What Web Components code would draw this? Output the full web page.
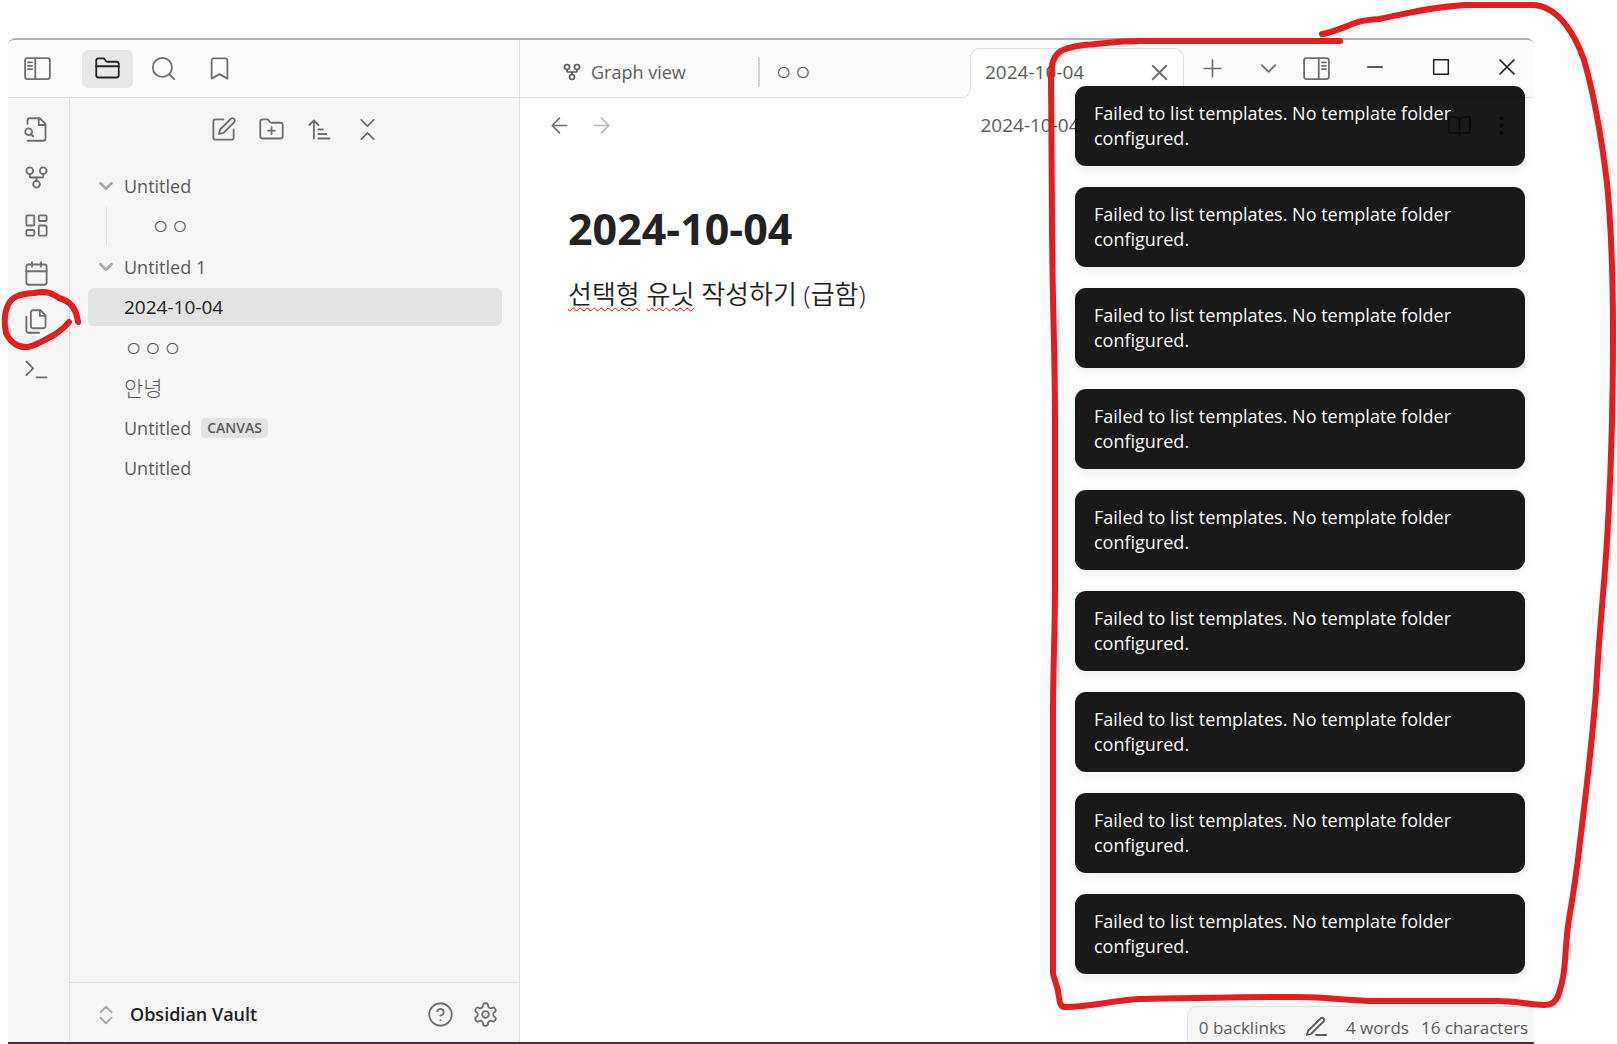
<!DOCTYPE html>
<html lang="ko">
<head>
<meta charset="utf-8">
<title>2024-10-04 - Obsidian Vault</title>
<style>
  body {
    margin: 0;
    min-height: 100vh;
    overflow: hidden;
    position: relative;
    background: #fff;
    color: #5c5c5c;
    font-family: "Open Sans", "Noto Sans CJK KR", sans-serif;
    font-size: 18px;
    line-height: 25px;
    --bar: #fcfcfc;
    --side: #f6f6f6;
    --line: #e0e0e0;
    --active: #e3e3e3;
    --faint: #ababab;
    --icon: #6f6f6f;
    --strong: #222;
  }
</style>
</head>
<body>
<app-window>
  <side-header slot="side-header"></side-header>
  <side-ribbon slot="ribbon"></side-ribbon>
  <file-explorer slot="explorer">
    <tree-folder label="Untitled">
      <tree-file label="ㅇㅇ" nested hangul></tree-file>
    </tree-folder>
    <tree-folder label="Untitled 1">
      <tree-file label="2024-10-04" selected></tree-file>
    </tree-folder>
    <tree-file label="ㅇㅇㅇ" hangul></tree-file>
    <tree-file label="안녕" hangul></tree-file>
    <tree-file label="Untitled" tag="CANVAS"></tree-file>
    <tree-file label="Untitled"></tree-file>
  </file-explorer>
  <tab-strip slot="tabs"></tab-strip>
  <note-view slot="note" heading="2024-10-04">
    <span class="typo">선택형</span> <span class="typo">유닛</span> 작성하기 (급함)
  </note-view>
  <status-bar slot="status"></status-bar>
  <notice-stack slot="notices" count="9">Failed to list templates. No template folder configured.</notice-stack>
</app-window>
<pen-marks></pen-marks>

<script>
  const ICONS = {
    left: '<rect x="1" y="2.8" width="22" height="18.6" rx="2"/><path d="M10 3v18M3.6 6.6h3.6M3.6 9.6h3.6M3.6 12.6h3.6"/>',
    right: '<rect x="1" y="2.8" width="22" height="18.6" rx="2"/><path d="M14 3v18M16.8 6.6h3.6M16.8 9.6h3.6M16.8 12.6h3.6"/>',
    folder: '<path d="M4 20h16a2 2 0 0 0 2-2V8a2 2 0 0 0-2-2h-7.9a2 2 0 0 1-1.7-.9l-.8-1.2A2 2 0 0 0 7.900 3H4a2 2 0 0 0-2 2v13c0 1.100.9 2 2 2Z"/><path d="M2 10h20"/>',
    search: '<circle cx="11" cy="11" r="8.500"/><path d="m21.500 21.500-4.500-4.500"/>',
    bookmark: '<path d="m19 21-7-4-7 4V5a2 2 0 0 1 2-2h10a2 2 0 0 1 2 2v16z"/>',
    fileSearch: '<path d="M4 22h14a2 2 0 0 0 2-2V7l-5-5H6a2 2 0 0 0-2 2v3"/><path d="M14 2v6h6"/><circle cx="5" cy="14" r="3"/><path d="m9 18-1.500-1.500"/>',
    fork: '<circle cx="12" cy="18" r="3"/><circle cx="6" cy="6" r="3"/><circle cx="18" cy="6" r="3"/><path d="M18 9v2c0 .6-.4 1-1 1H7c-.6 0-1-.4-1-1V9"/><path d="M12 12v3"/>',
    dashboard: '<rect x="3" y="3" width="7" height="9" rx="1"/><rect x="14" y="3" width="7" height="5" rx="1"/><rect x="14" y="12" width="7" height="9" rx="1"/><rect x="3" y="16" width="7" height="5" rx="1"/>',
    calendar: '<rect x="3" y="4" width="18" height="18" rx="2"/><path d="M16 2v4M8 2v4M3 10h18"/>',
    files: '<path d="M15.500 2H8.600c-.4 0-.8.2-1.100.5-.3.3-.5.7-.5 1.100v12.800c0 .4.2.8.5 1.100.3.3.7.5 1.100.5h9.800c.4 0 .8-.2 1.100-.5.3-.3.5-.7.5-1.100V6.500L15.500 2z"/><path d="M3 7.600v12.800c0 .4.2.8.5 1.100.3.3.7.5 1.100.5h9.800"/><path d="M15 2v5h5"/>',
    terminal: '<path d="m3 17 6-6-6-6M12 19h9"/>',
    edit: '<path d="M12 3H5a2 2 0 0 0-2 2v14a2 2 0 0 0 2 2h14a2 2 0 0 0 2-2v-7"/><path d="M18.400 2.600a2.100 2.100 0 1 1 3 3L12 15l-4 1 1-4Z"/>',
    folderPlus: '<path d="M4 20h16a2 2 0 0 0 2-2V8a2 2 0 0 0-2-2h-7.900a2 2 0 0 1-1.700-.9l-.8-1.200A2 2 0 0 0 7.900 3H4a2 2 0 0 0-2 2v13c0 1.100.9 2 2 2Z"/><path d="M12 10v6M9 13h6"/>',
    sort: '<path d="m3 8 4-4 4 4M7 4v16M11 12h4M11 16h7M11 20h10"/>',
    collapse: '<path d="m6.500 20.500 5.500-5.500 5.500 5.500M6.500 3.500 12 9l5.500-5.500"/>',
    updown: '<path d="m6 15 6 6 6-6M6 9l6-6 6 6"/>',
    help: '<circle cx="12" cy="12" r="10"/><path d="M9.100 9a3 3 0 0 1 5.800 1c0 2-3 3-3 3M12 17h.01"/>',
    gear: '<path d="M12.220 2h-.44a2 2 0 0 0-2 2v.18a2 2 0 0 1-1 1.730l-.43.25a2 2 0 0 1-2 0l-.15-.08a2 2 0 0 0-2.730.73l-.22.38a2 2 0 0 0 .73 2.730l.15.1a2 2 0 0 1 1 1.720v.51a2 2 0 0 1-1 1.740l-.15.09a2 2 0 0 0-.73 2.730l.22.38a2 2 0 0 0 2.730.73l.15-.08a2 2 0 0 1 2 0l.43.25a2 2 0 0 1 1 1.730V20a2 2 0 0 0 2 2h.44a2 2 0 0 0 2-2v-.18a2 2 0 0 1 1-1.730l.43-.25a2 2 0 0 1 2 0l.15.08a2 2 0 0 0 2.730-.73l.22-.39a2 2 0 0 0-.73-2.730l-.15-.08a2 2 0 0 1-1-1.740v-.5a2 2 0 0 1 1-1.740l.15-.09a2 2 0 0 0 .73-2.730l-.22-.38a2 2 0 0 0-2.730-.73l-.15.08a2 2 0 0 1-2 0l-.43-.25a2 2 0 0 1-1-1.730V4a2 2 0 0 0-2-2z"/><circle cx="12" cy="12" r="3"/>',
    chevron: '<path d="m6 9 6 6 6-6"/>',
    back: '<path d="m12 19-7-7 7-7M19 12H5"/>',
    forward: '<path d="M5 12h14M12 5l7 7-7 7"/>',
    book: '<path d="M2 4h6a4 4 0 0 1 4 3v14a3 3 0 0 0-3-2H2zM22 4h-6a4 4 0 0 0-4 3v14a3 3 0 0 1 3-2h7z"/>',
    dots: '<circle cx="12" cy="5" r="1"/><circle cx="12" cy="12" r="1"/><circle cx="12" cy="19" r="1"/>',
    close: '<path d="M18 6 6 18M6 6l12 12"/>',
    plus: '<path d="M4 12h16M12 4v16"/>',
    pen: '<path d="M12 20h10"/><path d="M16.500 3.500a2.100 2.100 0 0 1 3 3L7 19l-4 1 1-4Z"/>',
    minimize: '<path d="M4 12h16"/>',
    maximize: '<path d="M4 4h16v16H4z"/>'
  };

  // Attach an open shadow root and fill it from a template
  function render(host, html) {
    const template = document.createElement('template');
    template.innerHTML = html;
    host.attachShadow({ mode: 'open' }).appendChild(template.content.cloneNode(true));
  }

  const BUTTON_CSS = `
    button {
      display: flex;
      align-items: center;
      justify-content: center;
      flex: none;
      width: 40px;
      height: 38px;
      padding: 0;
      border: 0;
      border-radius: 6px;
      background: none;
      color: var(--icon);
      font: inherit;
      cursor: pointer;
    }
    button:hover { background: rgba(0, 0, 0, 0.06); }
  `;

  class UiIcon extends HTMLElement {
    connectedCallback() {
      const size = this.getAttribute('size') || 27;
      const weight = this.getAttribute('weight') || 1.6;
      render(this, `
        <style>
          :host { display: block; flex: none; }
          svg { display: block; fill: none; stroke: currentColor; stroke-linecap: round; stroke-linejoin: round; }
        </style>
        <svg aria-hidden="true" width="${size}" height="${size}" viewBox="0 0 24 24" stroke-width="${weight}">${ICONS[this.getAttribute('name')]}</svg>
      `);
    }
  }

  class AppWindow extends HTMLElement {
    constructor() {
      super();
      render(this, `
        <style>
          :host {
            display: grid;
            grid-template-columns: 512px 1fr;
            grid-template-rows: 58px 1fr;
            position: relative;
            box-sizing: border-box;
            height: calc(100vh - 38px);
            margin: 38px 83px 0 8px;
            border-top: 2px solid #b0b0b0;
            border-bottom: 2px solid #38383b;
            border-radius: 8px 8px 0 0;
          }
          .side {
            display: grid;
            grid-template-columns: 62px 1fr;
            min-height: 0;
            box-sizing: border-box;
            border-right: 1px solid var(--line);
            background: var(--side);
          }
          .notices { position: absolute; top: 46px; right: 9px; }
          .status { position: absolute; right: 0; bottom: 0; }
        </style>
        <slot name="side-header"></slot>
        <slot name="tabs"></slot>
        <div class="side">
          <slot name="ribbon"></slot>
          <slot name="explorer"></slot>
        </div>
        <slot name="note"></slot>
        <div class="status"><slot name="status"></slot></div>
        <div class="notices"><slot name="notices"></slot></div>
      `);
    }
  }

  class SideHeader extends HTMLElement {
    constructor() {
      super();
      render(this, `
        <style>
          ${BUTTON_CSS}
          :host {
            display: flex;
            align-items: center;
            box-sizing: border-box;
            padding-left: 9px;
            border-right: 1px solid var(--line);
            border-bottom: 1px solid var(--line);
            border-top-left-radius: 6px;
            background: var(--bar);
          }
          .views { display: flex; gap: 5px; margin-left: 25px; }
          .views button { width: 51px; }
          .views .on { background: #e8e8e8; color: var(--strong); }
        </style>
        <button aria-label="Collapse"><ui-icon name="left"></ui-icon></button>
        <div class="views">
          <button class="on" aria-label="Files"><ui-icon name="folder"></ui-icon></button>
          <button aria-label="Search"><ui-icon name="search"></ui-icon></button>
          <button aria-label="Bookmarks"><ui-icon name="bookmark"></ui-icon></button>
        </div>
      `);
    }
  }

  class SideRibbon extends HTMLElement {
    constructor() {
      super();
      const items = [
        ['fileSearch', 'Open quick switcher'],
        ['fork', 'Open graph view'],
        ['dashboard', 'Create new canvas'],
        ['calendar', "Open today's daily note"],
        ['files', 'Insert template'],
        ['terminal', 'Open command palette']
      ];
      render(this, `
        <style>
          ${BUTTON_CSS}
          :host {
            display: flex;
            flex-direction: column;
            gap: 10px;
            padding: 12px 0 0 8px;
            border-right: 1px solid var(--line);
          }
        </style>
        ${items.map(([icon, label]) => `<button aria-label="${label}"><ui-icon name="${icon}"></ui-icon></button>`).join('')}
      `);
    }
  }

  class FileExplorer extends HTMLElement {
    constructor() {
      super();
      render(this, `
        <style>
          ${BUTTON_CSS}
          :host { display: flex; flex-direction: column; min-width: 0; }
          .actions {
            display: flex;
            justify-content: center;
            gap: 8px;
            padding: 12px 0 19px 2px;
          }
          .tree {
            display: flex;
            flex-direction: column;
            gap: 2px;
            flex: 1;
            padding: 0 17px 0 18px;
          }
          .vault {
            display: flex;
            align-items: center;
            height: 55px;
            padding: 4px 11px 0 25px;
            border-top: 1px solid var(--line);
          }
          .vault .name {
            gap: 13px;
            width: auto;
            margin-right: auto;
            color: var(--strong);
            font-weight: 600;
          }
          .name ui-icon { color: var(--faint); }
          .vault .small { width: 45px; }
        </style>
        <div class="actions">
          <button aria-label="New note"><ui-icon name="edit"></ui-icon></button>
          <button aria-label="New folder"><ui-icon name="folderPlus"></ui-icon></button>
          <button aria-label="Change sort order"><ui-icon name="sort"></ui-icon></button>
          <button aria-label="Collapse all"><ui-icon name="collapse"></ui-icon></button>
        </div>
        <div class="tree"><slot></slot></div>
        <div class="vault">
          <button class="name"><ui-icon name="updown" size="22" weight="2"></ui-icon>Obsidian Vault</button>
          <button class="small" aria-label="Help"><ui-icon name="help"></ui-icon></button>
          <button class="small" aria-label="Settings"><ui-icon name="gear"></ui-icon></button>
        </div>
      `);
    }
  }

  class TreeFolder extends HTMLElement {
    constructor() {
      super();
      render(this, `
        <style>
          ${BUTTON_CSS}
          :host { display: block; padding-bottom: 1px; }
          button {
            justify-content: flex-start;
            gap: 7px;
            width: 100%;
            margin-bottom: 2px;
            padding-left: 7px;
            color: inherit;
          }
          ui-icon { color: var(--faint); }
        </style>
        <button><ui-icon name="chevron" size="22" weight="3"></ui-icon>${this.getAttribute('label')}</button>
        <slot></slot>
      `);
    }
  }

  class TreeFile extends HTMLElement {
    constructor() {
      super();
      const label = this.getAttribute('label');
      const tag = this.getAttribute('tag');
      render(this, `
        <style>
          :host { display: block; }
          :host([nested]) { margin-left: 18px; border-left: 1px solid var(--line); }
          a {
            display: flex;
            align-items: center;
            gap: 10px;
            height: 38px;
            padding-left: 36px;
            border-radius: 6px;
            color: inherit;
            text-decoration: none;
          }
          :host([nested]) a { padding-left: 44px; }
          :host([hangul]) a { font-size: 21px; font-weight: 300; }
          :host([selected]) a { background: var(--active); color: var(--strong); font-size: 19px; }
          .tag {
            padding: 0 6px;
            border-radius: 5px;
            background: var(--active);
            font-size: 14px;
            font-weight: 600;
            line-height: 20px;
          }
        </style>
        <a href="#">${label}${tag ? `<span class="tag">${tag}</span>` : ''}</a>
      `);
    }
  }

  class TabStrip extends HTMLElement {
    constructor() {
      super();
      render(this, `
        <style>
          ${BUTTON_CSS}
          :host {
            display: flex;
            align-items: center;
            box-sizing: border-box;
            min-width: 0;
            padding-left: 28px;
            border-bottom: 1px solid var(--line);
            border-top-right-radius: 6px;
            background: var(--bar);
          }
          .tab {
            display: flex;
            align-items: center;
            align-self: flex-end;
            gap: 9px;
            flex: 0 1 210px;
            box-sizing: border-box;
            height: 50px;
            margin-bottom: -1px;
            padding: 0 4px 2px 14px;
          }
          .tab a { color: inherit; text-decoration: none; margin-right: auto; }
          .hangul { font-size: 21px; font-weight: 300; }
          .divider { flex: none; width: 2px; height: 30px; margin-top: 6px; background: #d4d4d4; }
          .active {
            position: relative;
            flex-basis: 214px;
            border: 1px solid var(--line);
            border-bottom: 0;
            border-radius: 10px 10px 0 0;
            background: #fff;
            font-size: 19px;
          }
          .active::before, .active::after {
            content: "";
            position: absolute;
            bottom: 0;
            width: 10px;
            height: 10px;
          }
          .active::before { left: -10px; background: radial-gradient(circle at 0 0, var(--bar) 9px, var(--line) 9px 10px, #fff 10px); }
          .active::after { right: -10px; background: radial-gradient(circle at 100% 0, var(--bar) 9px, var(--line) 9px 10px, #fff 10px); }
          .add { margin-left: 8px; }
          .menu { margin-left: auto; }
          .toggle { margin-left: 8px; }
          .frame { display: flex; gap: 12px; margin-left: 12px; padding-bottom: 3px; }
          .frame button { width: 54px; color: var(--strong); }
        </style>
        <div class="tab"><ui-icon name="fork" size="20" weight="2"></ui-icon><a href="#">Graph view</a></div>
        <span class="divider"></span>
        <div class="tab"><a class="hangul" href="#">ㅇㅇ</a></div>
        <div class="tab active"><a href="#">2024-10-04</a><button aria-label="Close tab"><ui-icon name="close" weight="1.8"></ui-icon></button></div>
        <button class="add" aria-label="New tab"><ui-icon name="plus" size="25"></ui-icon></button>
        <button class="menu" aria-label="Tab list"><ui-icon name="chevron"></ui-icon></button>
        <button class="toggle" aria-label="Expand"><ui-icon name="right"></ui-icon></button>
        <div class="frame">
          <button aria-label="Minimize"><ui-icon name="minimize" size="22"></ui-icon></button>
          <button aria-label="Maximize"><ui-icon name="maximize" size="22"></ui-icon></button>
          <button aria-label="Close"><ui-icon name="close" size="28" weight="1.5"></ui-icon></button>
        </div>
      `);
    }
  }

  class NoteView extends HTMLElement {
    constructor() {
      super();
      const heading = this.getAttribute('heading');
      render(this, `
        <style>
          ${BUTTON_CSS}
          :host { display: block; min-width: 0; background: #fff; }
          header {
            display: grid;
            grid-template-columns: 1fr auto 1fr;
            align-items: center;
            height: 55px;
            padding: 0 12px 0 18px;
            font-size: 19px;
          }
          nav { display: flex; }
          nav:last-child { justify-content: flex-end; }
          nav button { width: 42px; }
          nav button:disabled { color: #b8b8b8; }
          article { padding: 46px 48px; color: var(--strong); }
          h1 { margin: 0 0 15px; font-size: 43px; line-height: 60px; }
          p { margin: 0; font-size: 26px; line-height: 40px; font-weight: 350; }
          ::slotted(.typo) {
            text-decoration: underline wavy #f00 1px;
            text-underline-offset: 3px;
            text-decoration-skip-ink: none;
          }
        </style>
        <header>
          <nav>
            <button aria-label="Back"><ui-icon name="back" size="25"></ui-icon></button>
            <button aria-label="Forward" disabled><ui-icon name="forward" size="25"></ui-icon></button>
          </nav>
          <span>${heading}</span>
          <nav>
            <button aria-label="Reading view"><ui-icon name="book" size="25"></ui-icon></button>
            <button aria-label="More options"><ui-icon name="dots" size="25" weight="2"></ui-icon></button>
          </nav>
        </header>
        <article>
          <h1>${heading}</h1>
          <p><slot></slot></p>
        </article>
      `);
    }
  }

  class StatusBar extends HTMLElement {
    constructor() {
      super();
      render(this, `
        <style>
          ${BUTTON_CSS}
          :host {
            display: flex;
            align-items: center;
            gap: 12px;
            height: 35px;
            padding: 0 6px 0 11px;
            border: 1px solid var(--line);
            border-width: 1px 0 0 1px;
            border-top-left-radius: 10px;
            background: var(--side);
            font-size: 17px;
          }
          span { padding-top: 6px; }
          button { width: 36px; height: 30px; padding-top: 5px; color: inherit; }
        </style>
        <span>0 backlinks</span>
        <button aria-label="Editing view"><ui-icon name="pen" size="24" weight="1.8"></ui-icon></button>
        <span>4 words</span>
        <span>16 characters</span>
      `);
    }
  }

  class NoticeStack extends HTMLElement {
    connectedCallback() {
      const text = this.textContent.trim();
      const count = Number(this.getAttribute('count'));
      render(this, `
        <style>
          :host { display: flex; flex-direction: column; gap: 21px; width: 450px; }
        </style>
        ${`<notice-toast>${text}</notice-toast>`.repeat(count)}
      `);
    }
  }

  class NoticeToast extends HTMLElement {
    constructor() {
      super();
      render(this, `
        <style>
          :host {
            display: block;
            box-sizing: border-box;
            padding: 15px 19px;
            border-radius: 11px;
            background: rgba(0, 0, 0, 0.9);
            box-shadow: 0 3px 12px rgba(0, 0, 0, 0.08);
            color: #fafafa;
          }
        </style>
        <slot></slot>
      `);
    }
  }

  // Freehand red pen strokes drawn over the window
  class PenMarks extends HTMLElement {
    constructor() {
      super();
      render(this, `
        <style>
          :host { position: absolute; top: 0; left: 0; pointer-events: none; }
          svg { display: block; fill: none; stroke: #e71c1c; stroke-width: 6; stroke-linecap: round; stroke-linejoin: round; }
        </style>
        <svg aria-hidden="true" width="1617" height="1044" viewBox="0 0 1617 1044">
          <path d="M78 322C76 305 67 300 59 298C48 290 41 292 33 293C19 294 12 297 8 305C4 313 4 325 6 333C10 342 18 348 28 347C38 345 46 339 54 335C60 331 65 327 69 322"/>
          <path d="M1340 41H1140C1115 41 1100 44 1084 45C1060 48 1051 52 1051 77C1051 140 1052 180 1052 230C1053 330 1055 350 1055 430V580C1055 640 1053 660 1053 720V973C1054 981 1058 985 1059 997C1060 1005 1061 1007 1066 1007C1090 1007 1115 1000 1139 999C1190 998 1240 997 1297 997C1330 997 1350 1001 1375 1001H1497C1515 1001 1528 1004 1544 1005C1552 1005 1556 1002 1559 993C1567 970 1564 950 1569 919C1574 890 1577 870 1580 842C1585 800 1594 730 1597 675C1600 620 1606 570 1608 522C1611 470 1613 400 1613 333C1613 270 1611 225 1607 183C1603 150 1597 105 1584 60C1577 40 1560 5 1532 5H1465C1430 7 1410 13 1379 19C1370 20 1363 20 1355 23C1342 28 1334 32 1322 34"/>
        </svg>
      `);
    }
  }

  customElements.define('ui-icon', UiIcon);
  customElements.define('app-window', AppWindow);
  customElements.define('side-header', SideHeader);
  customElements.define('side-ribbon', SideRibbon);
  customElements.define('file-explorer', FileExplorer);
  customElements.define('tree-folder', TreeFolder);
  customElements.define('tree-file', TreeFile);
  customElements.define('tab-strip', TabStrip);
  customElements.define('note-view', NoteView);
  customElements.define('status-bar', StatusBar);
  customElements.define('notice-toast', NoticeToast);
  customElements.define('notice-stack', NoticeStack);
  customElements.define('pen-marks', PenMarks);
</script>
</body>
</html>
